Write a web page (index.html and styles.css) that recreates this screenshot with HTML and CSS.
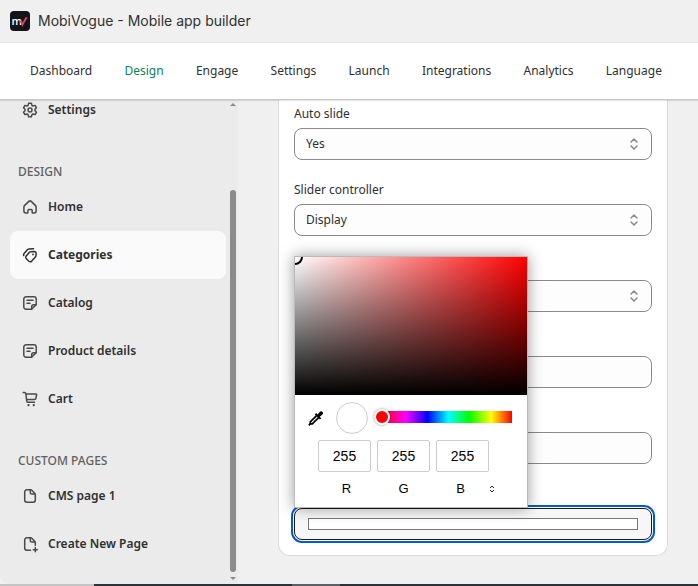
FILE: index.html
```html
<!DOCTYPE html>
<html lang="en">
<head>
<meta charset="utf-8">
<title>MobiVogue - Mobile app builder</title>
<link rel="stylesheet" href="styles.css">
</head>
<body>
<div class="app">
  <header class="titlebar">
    <svg class="logo" viewBox="0 0 20 20" aria-hidden="true">
      <rect width="20" height="20" rx="4" fill="#12141a"/>
      <text class="logo-letter" x="1.500" y="14">m</text>
      <path d="M10.500 9.500l1.900 4.100 4.200-7.300" fill="none" stroke="#e0425c" stroke-width="1.900"/>
    </svg>
    <h1 class="title">MobiVogue - Mobile app builder</h1>
  </header>

  <nav class="topnav" aria-label="Main">
    <a href="#dashboard">Dashboard</a>
    <a href="#design" class="active">Design</a>
    <a href="#engage">Engage</a>
    <a href="#settings">Settings</a>
    <a href="#launch">Launch</a>
    <a href="#integrations">Integrations</a>
    <a href="#analytics">Analytics</a>
    <a href="#language">Language</a>
  </nav>

  <div class="workspace">
    <aside class="sidebar">
      <div class="menu">
        <a class="item" href="#app-settings">
          <svg class="icon" viewBox="0 0 20 20"><path d="M8.600 3.200h2.800l.5 2.100 1.200.7 2-.6 1.400 2.400-1.500 1.500v1.400l1.500 1.500-1.400 2.400-2-.6-1.200.7-.5 2.100H8.600l-.5-2.100-1.200-.7-2 .6-1.400-2.400L5 10.700V9.300L3.500 7.800l1.400-2.400 2 .6 1.200-.7z"/><circle cx="10" cy="10" r="2"/></svg>
          Settings
        </a>
        <h2 class="group">DESIGN</h2>
        <a class="item" href="#home">
          <svg class="icon" viewBox="0 0 20 20"><path d="M3.900 10.200c0-.7.3-1.300.8-1.800l4.100-4c.7-.7 1.700-.7 2.400 0l4.100 4c.5.500.8 1.100.8 1.800v3.900c0 1.100-.8 1.900-1.900 1.900h-1.500c-.3 0-.5-.2-.5-.5v-1.800c0-.6-.5-1.100-1.100-1.100H9c-.6 0-1.100.5-1.100 1.100v1.800c0 .3-.2.5-.5.5H5.800c-1.100 0-1.900-.8-1.900-1.900z"/></svg>
          Home
        </a>
        <a class="item selected" href="#categories">
          <svg class="icon" viewBox="0 0 20 20"><path d="M10.800 6.700l3.300-.2c1.100 0 2 .8 2 1.900l-.1 2.200c0 .6-.3 1.100-.6 1.500l-3.700 4c-.8.8-2 .8-2.800.1l-2.600-2.500c-.8-.8-.8-2 0-2.800l3.100-3.600c.4-.4.900-.6 1.400-.600z"/><path d="M3.700 10.600c-.3-.8-.1-1.500.4-2.100l3.300-3.700c.4-.5.900-.7 1.500-.7l4.600-.3"/><circle class="dot" cx="13" cy="9.500" r="1"/></svg>
          Categories
        </a>
        <a class="item" href="#catalog">
          <svg class="icon" viewBox="0 0 20 20"><path d="M6 3.800h8c1.200 0 2.200 1 2.200 2.200v5.600l-4.600 4.600H6c-1.200 0-2.200-1-2.200-2.200V6c0-1.200 1-2.200 2.200-2.200z"/><path d="M11.700 16v-2.300c0-1.100.9-2 2-2H16M7 7.300h6M7 10.200h3"/></svg>
          Catalog
        </a>
        <a class="item" href="#product">
          <svg class="icon" viewBox="0 0 20 20"><path d="M6 3.800h8c1.200 0 2.200 1 2.200 2.200v5.600l-4.600 4.600H6c-1.200 0-2.200-1-2.200-2.200V6c0-1.200 1-2.200 2.200-2.200z"/><path d="M11.700 16v-2.300c0-1.100.9-2 2-2H16M7 7.300h6M7 10.200h3"/></svg>
          Product details
        </a>
        <a class="item" href="#cart">
          <svg class="icon" viewBox="0 0 20 20"><path d="M3.200 3.500h1.300c.7 0 1.200.4 1.300 1.100l1 7.700c.1.600.5 1 1.100 1h6.600M6.200 5h9.900c.4 0 .6.3.5.700l-.7 3.700c-.1.700-.7 1.100-1.400 1.100H6.800"/><circle class="dot" cx="8.500" cy="16.200" r="1.100"/><circle class="dot" cx="13.700" cy="16.200" r="1.100"/></svg>
          Cart
        </a>
        <h2 class="group">CUSTOM PAGES</h2>
        <a class="item" href="#cms">
          <svg class="icon" viewBox="0 0 20 20"><path d="M6.800 3.800h3.900c.4 0 .8.200 1.100.500l3.100 3.300c.3.300.4.600.4 1v5.400c0 1.200-.9 2.200-2.100 2.200H6.800c-1.200 0-2.100-1-2.100-2.200V6c0-1.200.9-2.200 2.100-2.200z"/><path d="M10.300 4v2.700c0 .8.600 1.400 1.400 1.400h3.300"/></svg>
          CMS page 1
        </a>
        <a class="item" href="#new-page">
          <svg class="icon" viewBox="0 0 20 20"><path d="M10.500 16.200H6.800c-1.200 0-2.100-1-2.100-2.200V6c0-1.200.9-2.200 2.100-2.200h3.900c.4 0 .8.200 1.100.500l3.100 3.300c.3.300.4.600.4 1v2.600"/><path d="M10.300 4v2.700c0 .8.600 1.400 1.400 1.400h3.300M15.300 13.600v4.200M13.200 15.700h4.200"/></svg>
          Create New Page
        </a>
      </div>
      <div class="scroll" aria-hidden="true">
        <svg viewBox="0 0 6 3"><path d="M3 0l3 3H0z"/></svg>
        <span class="thumb"></span>
        <svg viewBox="0 0 6 3"><path d="M0 0h6L3 3z"/></svg>
      </div>
    </aside>

    <main class="main">
      <form class="card">
        <div class="field">
          <label for="auto">Auto slide</label>
          <div class="control">
            <select id="auto"><option>Yes</option><option>No</option></select>
            <svg class="carets" viewBox="0 0 10 14"><path d="M2 5l3-3 3 3M2 9l3 3 3-3"/></svg>
          </div>
        </div>
        <div class="field">
          <label for="slider">Slider controller</label>
          <div class="control">
            <select id="slider"><option>Display</option><option>Hide</option></select>
            <svg class="carets" viewBox="0 0 10 14"><path d="M2 5l3-3 3 3M2 9l3 3 3-3"/></svg>
          </div>
        </div>
        <div class="field bare">
          <div class="control">
            <select aria-label="Option"><option></option></select>
            <svg class="carets" viewBox="0 0 10 14"><path d="M2 5l3-3 3 3M2 9l3 3 3-3"/></svg>
          </div>
        </div>
        <div class="field bare"><div class="control"><input type="text" aria-label="First value"></div></div>
        <div class="field bare"><div class="control"><input type="text" aria-label="Second value"></div></div>
        <div class="field bare">
          <div class="control">
            <input type="color" class="color" value="#ffffff" aria-label="Color">
            <div class="picker" role="dialog" aria-label="Color picker">
              <div class="shade"><span class="cursor"></span></div>
              <div class="tools">
                <button type="button" class="dropper" aria-label="Pick a color">
                  <svg viewBox="0 0 18 18"><path d="M9.600 6.600L3.300 12.900v2h2l6.300-6.300" fill="none" stroke="#000" stroke-width="1.700"/><path d="M1.800 16.300l1.700-1.700" stroke="#000" stroke-width="1.700"/><path d="M7.800 5.400l1.300-1.300 1.500 1.500 2.300-2.800c.7-.7 1.600-.7 2.300 0l.3.300c.7.700.7 1.600 0 2.300L12.700 7.700l1.500 1.500-1.300 1.300z"/></svg>
                </button>
                <span class="swatch"></span>
                <input type="range" class="hue" min="0" max="360" value="0" aria-label="Hue">
              </div>
              <div class="channels">
                <input id="r" type="text" value="255">
                <input id="g" type="text" value="255">
                <input id="b" type="text" value="255">
              </div>
              <div class="names">
                <label for="r">R</label>
                <label for="g">G</label>
                <label for="b">B</label>
                <button type="button" class="format" aria-label="Switch format">
                  <svg viewBox="0 0 6 8"><path d="M1 3l2-2 2 2M1 5l2 2 2-2"/></svg>
                </button>
              </div>
            </div>
          </div>
        </div>
      </form>
    </main>
  </div>
  <footer class="edge"><span></span></footer>
</div>
</body>
</html>
```
FILE: styles.css
```css
* { box-sizing: border-box; }

body {
  margin: 0;
  font: 12px/20px "Noto Sans", "Open Sans", sans-serif;
  color: #303030;
  background: #f0f0f0;
}

input, select, button { font: inherit; color: inherit; margin: 0; }
a { color: inherit; text-decoration: none; }

.app {
  display: flex;
  flex-direction: column;
  height: 100vh;
  overflow: hidden;
}

.titlebar {
  display: flex;
  align-items: center;
  gap: 8px;
  height: 43px;
  padding: 0 10px;
  border-bottom: 1px solid #e6e6e6;
  flex: none;
}
.logo { width: 20px; height: 20px; }
.logo-letter { font: 600 11px "Open Sans", sans-serif; fill: #fff; }
.title {
  margin: 0;
  font: 400 14px/20px Inter, sans-serif;
}

.topnav {
  position: relative;
  z-index: 1;
  display: flex;
  flex: none;
  justify-content: space-between;
  align-items: center;
  height: 57px;
  padding: 0 36px 0 30px;
  background: #fff;
  border-bottom: 1px solid #c8c8c8;
  box-shadow: 0 1px 1px #0000001a;
}
.active { color: #0c8060; }

.workspace {
  display: grid;
  grid-template-columns: 238px 1fr;
  flex: 1;
  min-height: 0;
}

.sidebar {
  display: flex;
  min-height: 0;
  background: #ebebeb;
  border-bottom-left-radius: 10px;
}
.menu {
  flex: 1;
  margin-top: -14px;
  padding-left: 10px;
}
.item {
  display: flex;
  align-items: center;
  gap: 8px;
  height: 48px;
  padding: 0 10px;
  border-radius: 8px;
  font-weight: 600;
}
.selected { background: #fafafa; font-weight: 700; }
.group {
  height: 49px;
  margin: 0;
  padding: 28px 8px 0;
  font-size: 12px;
  font-weight: 500;
  line-height: 20px;
  color: #616161;
}
.icon {
  width: 20px;
  height: 20px;
  fill: none;
  stroke: #4a4a4a;
  stroke-width: 1.5;
  stroke-linejoin: round;
  stroke-linecap: round;
}
.selected .icon { stroke: #303030; }
.icon .dot { fill: #4a4a4a; stroke: none; }

.scroll {
  display: flex;
  flex-direction: column;
  align-items: center;
  width: 12px;
  padding: 3px 2px 4px 4px;
}
.scroll svg { width: 6px; height: 3px; fill: #8b8b8b; }
.thumb {
  flex: 1;
  width: 6px;
  margin: 84px 0 5px;
  border-radius: 3px;
  background: #8b8b8b;
}

.main { padding: 0 30px 0 40px; }
.card {
  padding: 4px 15px 15px;
  background: #fff;
  border: 1px solid #dcdcdc;
  border-top: 0;
  border-radius: 0 0 12px 12px;
  display: grid;
  gap: 20px;
}
.field { display: grid; gap: 4px; }
.bare { padding-top: 24px; }
.control { position: relative; display: grid; }
.control > select,
.control > input {
  width: 100%;
  height: 32px;
  padding: 0 11px;
  appearance: none;
  background: #fdfdfd;
  border: 1px solid #8a8a8a;
  border-radius: 8px;
}
.carets {
  position: absolute;
  right: 13px;
  top: 9px;
  width: 10px;
  height: 14px;
  fill: none;
  stroke: #8a8a8a;
  stroke-width: 1.5;
  stroke-linecap: round;
  stroke-linejoin: round;
}
.control > .color {
  padding: 9px 13px;
  background: #f7f7f7;
  border-color: #1a1a1a;
  outline: 2px solid #005bd3;
  outline-offset: 1px;
}
.color::-webkit-color-swatch-wrapper { padding: 0; }
.color::-webkit-color-swatch { border: 1px solid #777; border-radius: 0; }

.picker {
  position: absolute;
  left: 0;
  bottom: 32px;
  width: 234px;
  height: 252px;
  background: #fff;
  border: 1px solid #bababa;
  box-shadow: 0 0 14px #00000066;
  font: 14px/16px "Liberation Sans", sans-serif;
  color: #000;
}
.shade {
  height: 138px;
  overflow: hidden;
  background: linear-gradient(to top, #000, transparent), linear-gradient(to right, #fff, #f00);
}
.cursor {
  display: block;
  width: 16px;
  height: 16px;
  margin: -8px;
  border: 2px solid #000;
  border-radius: 50%;
}
.tools {
  display: flex;
  align-items: center;
  padding: 7px 15px 6px 12px;
}
.dropper, .format {
  display: grid;
  padding: 0;
  border: 0;
  background: none;
}
.dropper svg { width: 18px; height: 18px; }
.swatch {
  width: 32px;
  height: 32px;
  margin: 0 6px 0 11px;
  border: 1px solid #ccc;
  border-radius: 50%;
  background: #fff;
}
.hue {
  flex: 1;
  min-width: 0;
  height: 16px;
  margin-bottom: 2px;
  appearance: none;
  background: linear-gradient(to right, #f00, #f0f 18%, #00f 35%, #0ff 51%, #0f0 67%, #ff0 84%, #f00) right / 130px 12px no-repeat;
}
.hue::-webkit-slider-thumb {
  appearance: none;
  width: 16px;
  height: 16px;
  border: 2px solid #fff;
  border-radius: 50%;
  background: #f00;
  box-shadow: 0 0 3px #00000066;
}
.channels {
  display: flex;
  gap: 6px;
  padding-left: 23px;
}
.channels input {
  width: 53px;
  height: 32px;
  padding: 0;
  text-align: center;
  border: 1px solid #ccc;
  border-radius: 2px;
}
.names {
  display: flex;
  align-items: center;
  padding: 9px 0 0 23px;
  font-size: 13px;
}
.names label { width: 57px; text-align: center; }
.format svg {
  width: 6px;
  height: 8px;
  fill: none;
  stroke: #222;
}

.edge {
  flex: none;
  height: 2px;
  padding-left: 94px;
  background: #c4c4c4;
}
.edge span {
  display: block;
  height: 2px;
  background: linear-gradient(#5a6066, #5a6066) 198px 0 / 48px 2px no-repeat #2b3238;
}
```
